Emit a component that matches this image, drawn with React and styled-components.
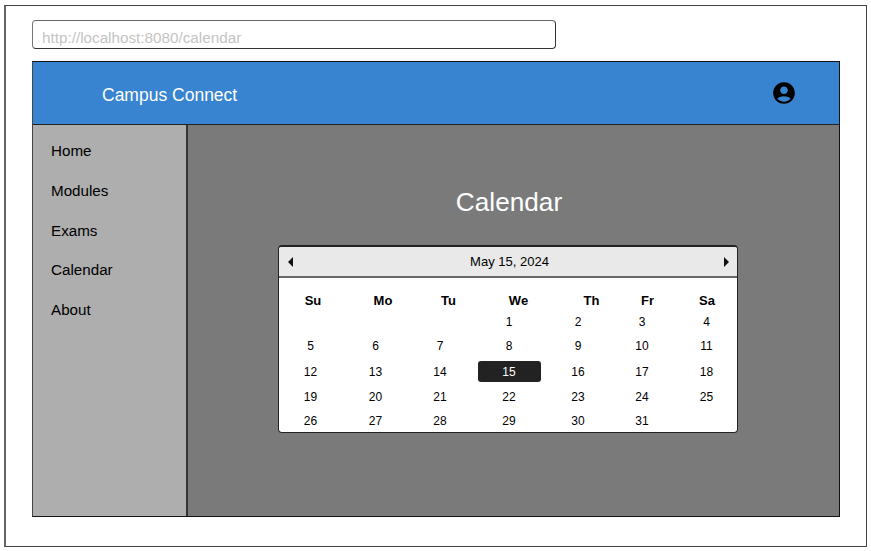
import React from 'react';
import styled, { createGlobalStyle } from 'styled-components';

const GlobalStyle = createGlobalStyle`
  html, body {
    margin: 0;
    background: #fff;
    font-family: "Liberation Sans", Arial, sans-serif;
    color: #000;
  }
`;

const Frame = styled.div`
  box-sizing: border-box;
  width: 863px;
  height: 542px;
  margin: 5px 0 0 4px;
  padding: 14px 26px 29px 26px;
  border: 1px solid #444;
  border-left: 2px solid #666;
  display: flex;
  flex-direction: column;
  gap: 12px;
`;

const AddressBar = styled.div`
  box-sizing: border-box;
  width: 524px;
  height: 29px;
  flex: none;
  padding-left: 9px;
  border: 1px solid #333;
  border-left-color: #777;
  border-top-color: #666;
  border-radius: 4px;
  font-size: 15.25px;
  line-height: 33px;
  color: #c4c4c4;
`;

const Window = styled.div`
  flex: 1;
  display: grid;
  grid-template-rows: 63px 1fr;
  grid-template-columns: 155px 1fr;
  border: 1px solid #111;
  border-left-color: #444;
`;

const Header = styled.header`
  grid-column: 1 / 3;
  display: flex;
  align-items: center;
  justify-content: space-between;
  padding: 3px 42px 0 69px;
  background: #3884d0;
  border-bottom: 1px solid #222;
  color: #fff;
  font-size: 17.5px;
`;

const Brand = styled.span`
  line-height: 22px;
`;

const ProfileIcon = styled.svg`
  display: block;
  width: 26px;
  height: 26px;
  margin-top: -4px;
  fill: #000;
`;

const Sidebar = styled.nav`
  display: flex;
  flex-direction: column;
  gap: 20.75px;
  padding: 16px 0 0 18px;
  background: #aeaeae;
  border-right: 2px solid #333;
`;

const NavItem = styled.a`
  font-size: 15.2px;
  line-height: 19px;
  color: #000;
`;

const Main = styled.main`
  display: flex;
  flex-direction: column;
  align-items: center;
  padding-right: 12px;
  background: #7a7a7a;
`;

const Title = styled.h1`
  margin: 61px 0 27px;
  padding-left: 3px;
  font-size: 26.2px;
  font-weight: 400;
  line-height: 32px;
  color: #fff;
`;

const Calendar = styled.div`
  box-sizing: border-box;
  width: 460px;
  height: 188px;
  background: #fff;
  border: 1px solid #222;
  border-top-width: 2px;
  border-radius: 4px;
  overflow: hidden;
`;

const CalendarBar = styled.div`
  height: 29px;
  display: flex;
  align-items: center;
  justify-content: space-between;
  padding: 0 8px 0 9px;
  background: #e9e9e9;
  border-bottom: 2px solid #666;
  font-size: 13px;
`;

const DateLabel = styled.span`
  margin-left: 3px;
`;

const Arrow = styled.span`
  width: 0;
  height: 0;
  border-top: 5px solid transparent;
  border-bottom: 5px solid transparent;
  ${({ $dir }) => ($dir === 'left' ? 'border-right: 5px solid #111;' : 'border-left: 5px solid #111;')}
`;

const WeekRow = styled.div`
  display: grid;
  grid-template-columns: 69px 71px 60px 80px 66px 46px 73px;
  height: 20px;
  margin-top: 13px;
  font-size: 13px;
  font-weight: 700;
  line-height: 20px;
  text-align: center;
`;

const DayGrid = styled.div`
  display: grid;
  grid-template-columns: 65px 65px 64px 74px 64px 64px 65px;
  grid-template-rows: 23px 25px 27px 23px 25px;
  margin-top: -1px;
  font-size: 12px;
  text-align: center;
`;

const Day = styled.div`
  display: flex;
  align-items: center;
  justify-content: center;
  margin: 3px 6px 3px 5px;
  border-radius: 3px;
  ${({ $selected }) => $selected && 'background: #222; color: #fff;'}
`;

const NAV = ['Home', 'Modules', 'Exams', 'Calendar', 'About'];
const WEEK = ['Su', 'Mo', 'Tu', 'We', 'Th', 'Fr', 'Sa'];
const BLANKS = [0, 1, 2];
const DAYS = Array.from({ length: 31 }, (_, i) => i + 1);

export default function App() {
  return (
    <Frame>
      <GlobalStyle />
      <AddressBar>http://localhost:8080/calendar</AddressBar>
      <Window>
        <Header>
          <Brand>Campus Connect</Brand>
          <ProfileIcon viewBox="0 0 24 24">
            <path d="M12 2C6.48 2 2 6.48 2 12s4.48 10 10 10 10-4.48 10-10S17.52 2 12 2zm0 4c1.93 0 3.5 1.57 3.5 3.5S13.93 13 12 13s-3.5-1.57-3.5-3.5S10.07 6 12 6zm0 14c-2.03 0-4.43-.82-6.14-2.88C7.55 15.8 9.68 15 12 15s4.45.8 6.14 2.12C16.43 19.18 14.03 20 12 20z" />
          </ProfileIcon>
        </Header>
        <Sidebar>
          {NAV.map((item) => (
            <NavItem key={item}>{item}</NavItem>
          ))}
        </Sidebar>
        <Main>
          <Title>Calendar</Title>
          <Calendar>
            <CalendarBar>
              <Arrow $dir="left" />
              <DateLabel>May 15, 2024</DateLabel>
              <Arrow $dir="right" />
            </CalendarBar>
            <WeekRow>
              {WEEK.map((d) => (
                <div key={d}>{d}</div>
              ))}
            </WeekRow>
            <DayGrid>
              {BLANKS.map((b) => (
                <Day key={`b${b}`} />
              ))}
              {DAYS.map((d) => (
                <Day key={d} $selected={d === 15}>{d}</Day>
              ))}
            </DayGrid>
          </Calendar>
        </Main>
      </Window>
    </Frame>
  );
}
